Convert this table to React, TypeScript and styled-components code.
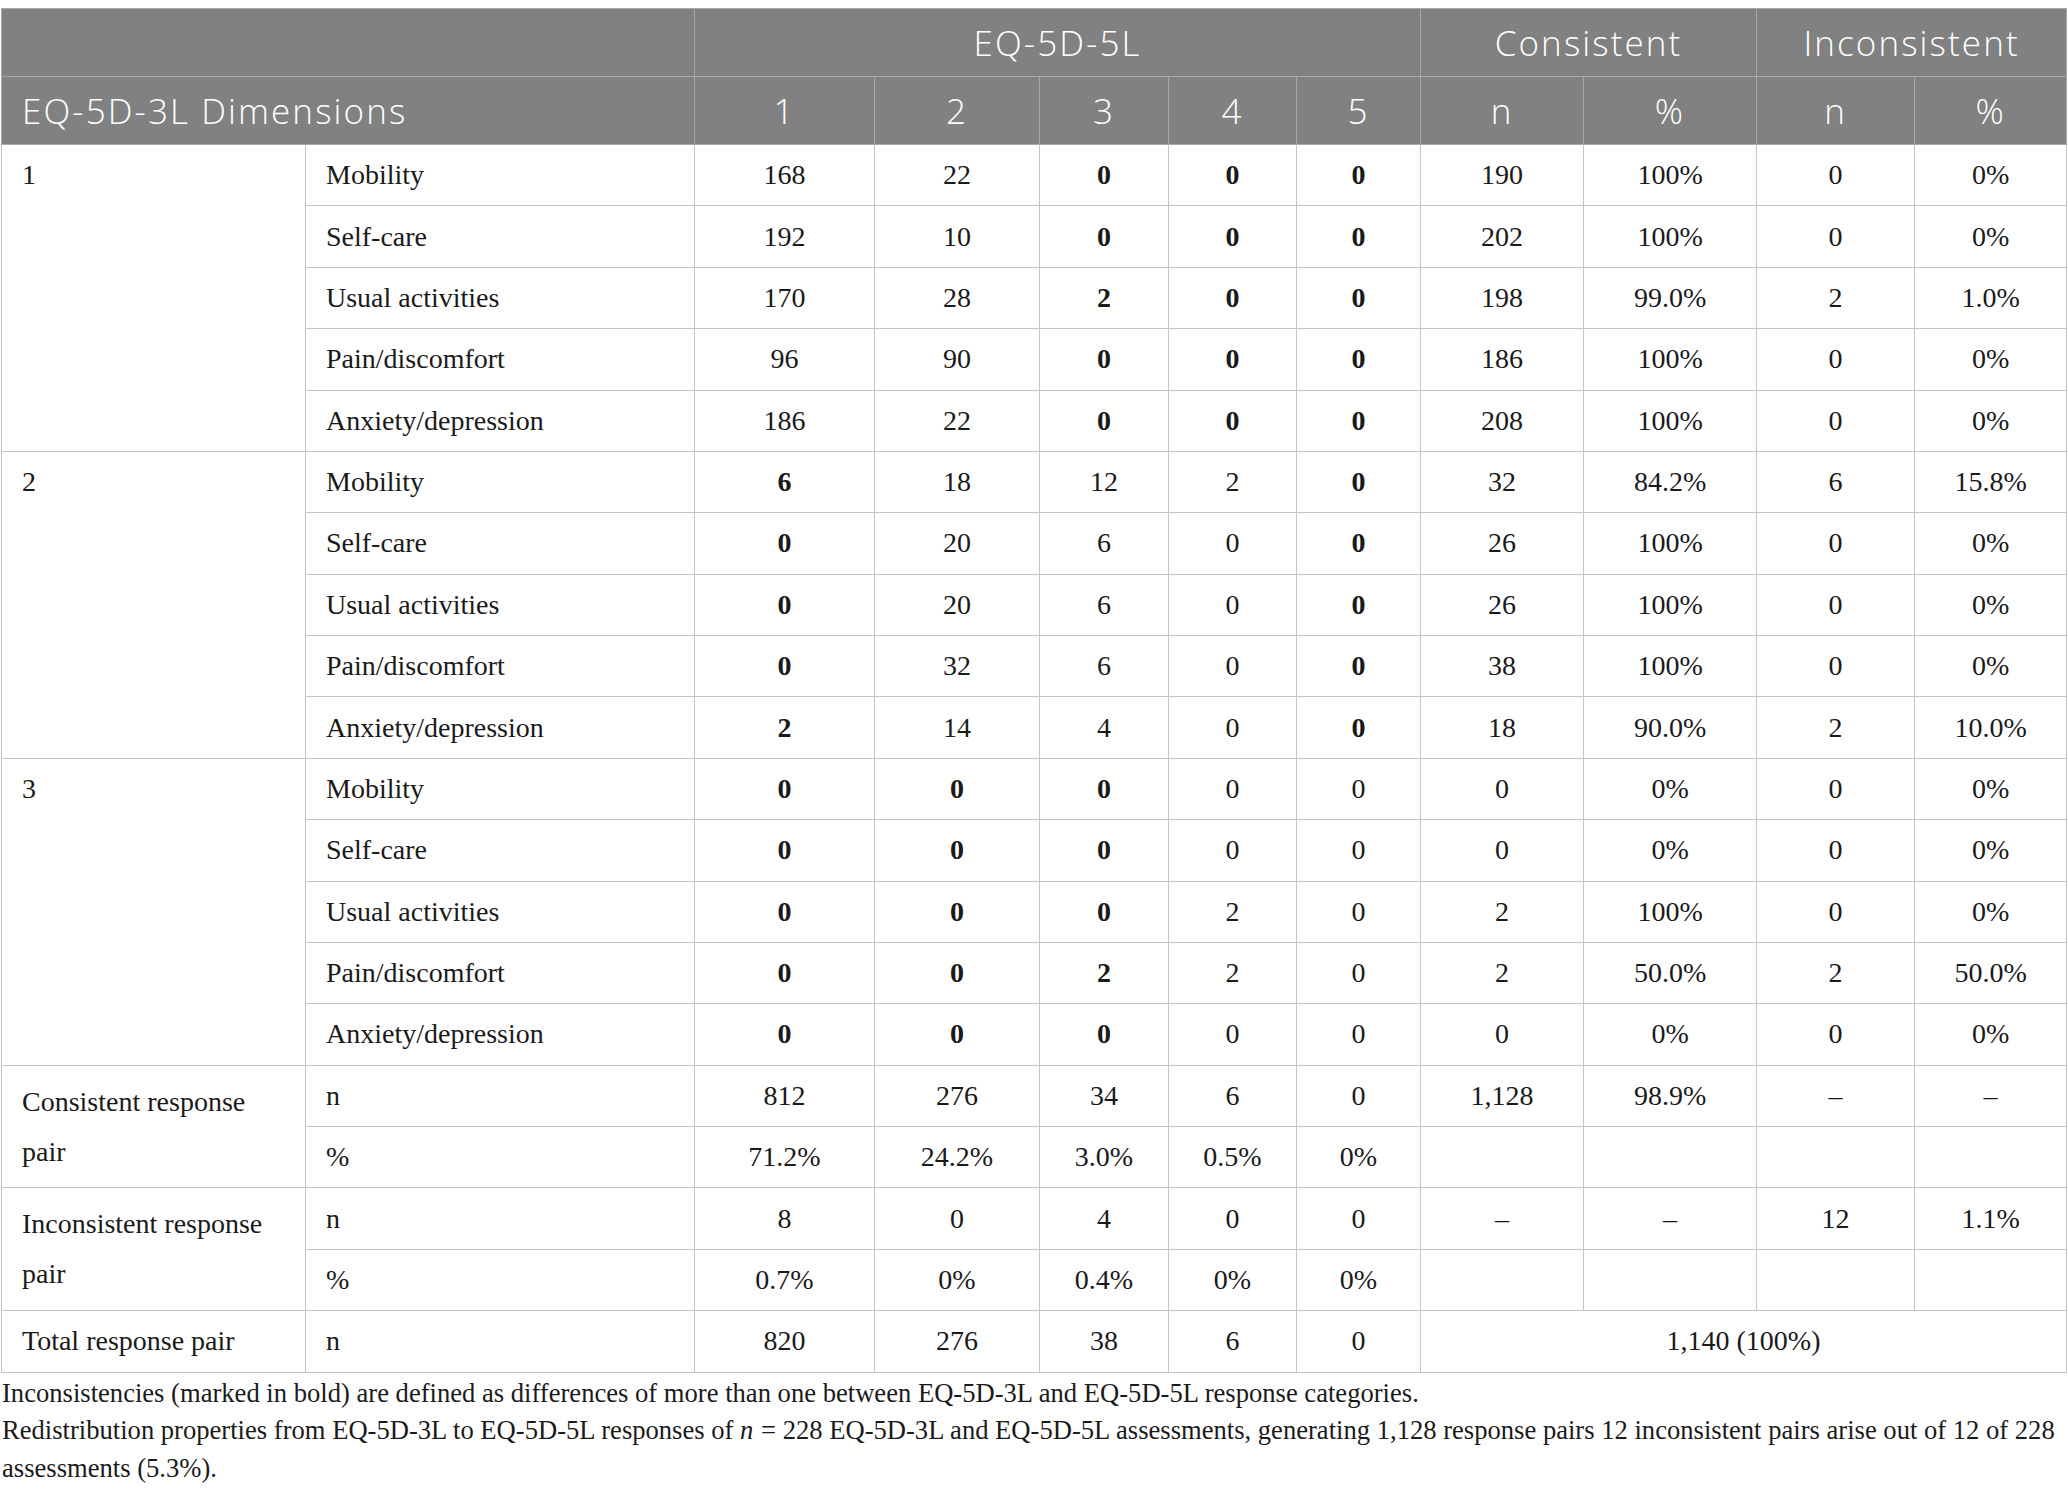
import React from "react";
import styled, { createGlobalStyle } from "styled-components";

const GlobalStyle = createGlobalStyle`
  html, body { margin: 0; padding: 0; background: #ffffff; }
  body { font-family: "Liberation Serif", "Times New Roman", serif; color: #1a1a1a; }
`;

const Page = styled.div`
  padding: 8px 1px 0 1px;
  width: 2066px;
`;

const Table = styled.table`
  width: 2065px;
  border-collapse: collapse;
  table-layout: fixed;
  border: 1px solid #c4c4c4;
`;

const HeadCell = styled.th<{ $align?: "left" | "center" }>`
  background: #808180;
  color: #ffffff;
  font-family: "Open Sans", "Noto Sans", sans-serif;
  font-weight: 300;
  font-size: 35px;
  letter-spacing: 2.1px;
  height: 67px;
  padding: 0 20px;
  text-align: ${(p) => p.$align ?? "center"};
  vertical-align: middle;
  border: 1px solid #a8a8a8;
  white-space: nowrap;
`;

const Cell = styled.td<{ $align?: "left" | "center"; $bold?: boolean; $top?: boolean }>`
  font-family: "Liberation Serif", "Times New Roman", serif;
  font-size: 28px;
  line-height: 50px;
  padding: 5.2px 20px;
  color: #1a1a1a;
  font-weight: ${(p) => (p.$bold ? 700 : 400)};
  text-align: ${(p) => p.$align ?? "center"};
  vertical-align: ${(p) => (p.$top ? "top" : "middle")};
  border: 1px solid #c4c4c4;
`;

const Notes = styled.div`
  font-family: "Liberation Serif", "Times New Roman", serif;
  font-size: 26.6px;
  line-height: 37.5px;
  color: #1a1a1a;
  margin-top: 2px;
  padding-left: 1px;
`;

const NoteLine = styled.p`
  margin: 0;
`;

const Var = styled.i`
  padding-right: 1px;
`;

const widths = [304, 389, 180, 165, 129, 128, 124, 163, 173, 158, 152];

type V = string | [string, true];

type Row = { label: string; vals: V[] };

const b = (s: string): [string, true] => [s, true];

const groups: { id: string; rows: Row[] }[] = [
  {
    id: "1",
    rows: [
      { label: "Mobility", vals: ["168", "22", b("0"), b("0"), b("0"), "190", "100%", "0", "0%"] },
      { label: "Self-care", vals: ["192", "10", b("0"), b("0"), b("0"), "202", "100%", "0", "0%"] },
      { label: "Usual activities", vals: ["170", "28", b("2"), b("0"), b("0"), "198", "99.0%", "2", "1.0%"] },
      { label: "Pain/discomfort", vals: ["96", "90", b("0"), b("0"), b("0"), "186", "100%", "0", "0%"] },
      { label: "Anxiety/depression", vals: ["186", "22", b("0"), b("0"), b("0"), "208", "100%", "0", "0%"] },
    ],
  },
  {
    id: "2",
    rows: [
      { label: "Mobility", vals: [b("6"), "18", "12", "2", b("0"), "32", "84.2%", "6", "15.8%"] },
      { label: "Self-care", vals: [b("0"), "20", "6", "0", b("0"), "26", "100%", "0", "0%"] },
      { label: "Usual activities", vals: [b("0"), "20", "6", "0", b("0"), "26", "100%", "0", "0%"] },
      { label: "Pain/discomfort", vals: [b("0"), "32", "6", "0", b("0"), "38", "100%", "0", "0%"] },
      { label: "Anxiety/depression", vals: [b("2"), "14", "4", "0", b("0"), "18", "90.0%", "2", "10.0%"] },
    ],
  },
  {
    id: "3",
    rows: [
      { label: "Mobility", vals: [b("0"), b("0"), b("0"), "0", "0", "0", "0%", "0", "0%"] },
      { label: "Self-care", vals: [b("0"), b("0"), b("0"), "0", "0", "0", "0%", "0", "0%"] },
      { label: "Usual activities", vals: [b("0"), b("0"), b("0"), "2", "0", "2", "100%", "0", "0%"] },
      { label: "Pain/discomfort", vals: [b("0"), b("0"), b("2"), "2", "0", "2", "50.0%", "2", "50.0%"] },
      { label: "Anxiety/depression", vals: [b("0"), b("0"), b("0"), "0", "0", "0", "0%", "0", "0%"] },
    ],
  },
];

const renderVals = (vals: V[]) =>
  vals.map((v, i) =>
    Array.isArray(v) ? (
      <Cell key={i} $bold>
        {v[0]}
      </Cell>
    ) : (
      <Cell key={i}>{v}</Cell>
    )
  );

export default function App() {
  return (
    <Page>
      <GlobalStyle />
      <Table>
        <colgroup>
          {widths.map((w, i) => (
            <col key={i} style={{ width: w }} />
          ))}
        </colgroup>
        <thead>
          <tr>
            <HeadCell colSpan={2} />
            <HeadCell colSpan={5}>EQ-5D-5L</HeadCell>
            <HeadCell colSpan={2}>Consistent</HeadCell>
            <HeadCell colSpan={2}>Inconsistent</HeadCell>
          </tr>
          <tr>
            <HeadCell colSpan={2} $align="left">
              EQ-5D-3L Dimensions
            </HeadCell>
            <HeadCell>1</HeadCell>
            <HeadCell>2</HeadCell>
            <HeadCell>3</HeadCell>
            <HeadCell>4</HeadCell>
            <HeadCell>5</HeadCell>
            <HeadCell>n</HeadCell>
            <HeadCell>%</HeadCell>
            <HeadCell>n</HeadCell>
            <HeadCell>%</HeadCell>
          </tr>
        </thead>
        <tbody>
          {groups.map((g) =>
            g.rows.map((r, ri) => (
              <tr key={g.id + ri}>
                {ri === 0 && (
                  <Cell rowSpan={5} $align="left" $top>
                    {g.id}
                  </Cell>
                )}
                <Cell $align="left">{r.label}</Cell>
                {renderVals(r.vals)}
              </tr>
            ))
          )}
          <tr>
            <Cell rowSpan={2} $align="left">
              Consistent response pair
            </Cell>
            <Cell $align="left">n</Cell>
            <Cell>812</Cell>
            <Cell>276</Cell>
            <Cell>34</Cell>
            <Cell>6</Cell>
            <Cell>0</Cell>
            <Cell>1,128</Cell>
            <Cell>98.9%</Cell>
            <Cell>–</Cell>
            <Cell>–</Cell>
          </tr>
          <tr>
            <Cell $align="left">%</Cell>
            <Cell>71.2%</Cell>
            <Cell>24.2%</Cell>
            <Cell>3.0%</Cell>
            <Cell>0.5%</Cell>
            <Cell>0%</Cell>
            <Cell />
            <Cell />
            <Cell />
            <Cell />
          </tr>
          <tr>
            <Cell rowSpan={2} $align="left">
              Inconsistent response pair
            </Cell>
            <Cell $align="left">n</Cell>
            <Cell>8</Cell>
            <Cell>0</Cell>
            <Cell>4</Cell>
            <Cell>0</Cell>
            <Cell>0</Cell>
            <Cell>–</Cell>
            <Cell>–</Cell>
            <Cell>12</Cell>
            <Cell>1.1%</Cell>
          </tr>
          <tr>
            <Cell $align="left">%</Cell>
            <Cell>0.7%</Cell>
            <Cell>0%</Cell>
            <Cell>0.4%</Cell>
            <Cell>0%</Cell>
            <Cell>0%</Cell>
            <Cell />
            <Cell />
            <Cell />
            <Cell />
          </tr>
          <tr>
            <Cell $align="left">Total response pair</Cell>
            <Cell $align="left">n</Cell>
            <Cell>820</Cell>
            <Cell>276</Cell>
            <Cell>38</Cell>
            <Cell>6</Cell>
            <Cell>0</Cell>
            <Cell colSpan={4}>1,140 (100%)</Cell>
          </tr>
        </tbody>
      </Table>
      <Notes>
        <NoteLine>
          Inconsistencies (marked in bold) are defined as differences of more than one between EQ-5D-3L and EQ-5D-5L
          response categories.
        </NoteLine>
        <NoteLine>
          Redistribution properties from EQ-5D-3L to EQ-5D-5L responses of <Var>n</Var> = 228 EQ-5D-3L and EQ-5D-5L
          assessments, generating 1,128 response pairs 12 inconsistent pairs arise out of 12 of 228 assessments (5.3%).
        </NoteLine>
      </Notes>
    </Page>
  );
}
